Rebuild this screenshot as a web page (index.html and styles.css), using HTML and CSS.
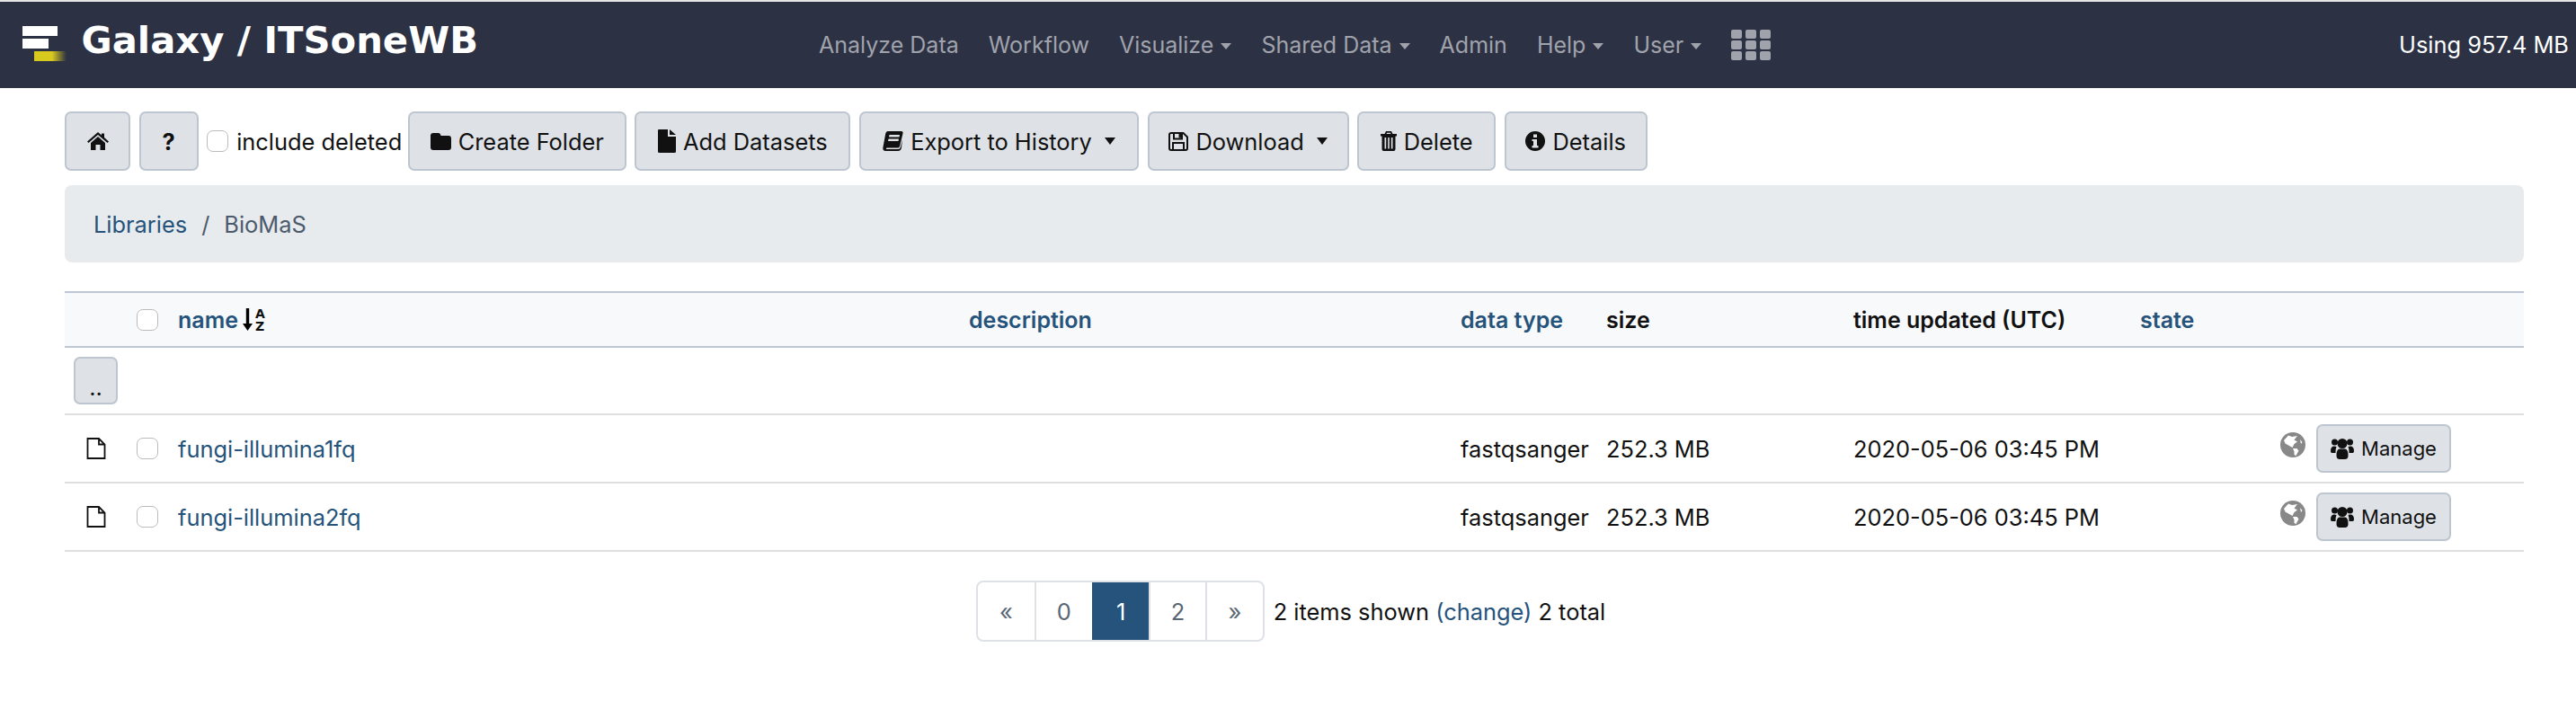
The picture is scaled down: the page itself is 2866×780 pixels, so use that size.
FILE: index.html
```html
<!DOCTYPE html>
<html lang="en">
<head>
    <meta charset="UTF-8">
    <title>Galaxy / ITSoneWB</title>
    <link rel="stylesheet" href="styles.css">
</head>
<body>
    <header class="masthead">
        <a class="brand" href="#">
            <span class="brand-logo">
                <span class="bar bar-one"></span>
                <span class="bar bar-two"></span>
                <span class="bar bar-three"></span>
            </span>
            <span class="brand-text">Galaxy / ITSoneWB</span>
        </a>
        <nav class="mainnav">
            <a href="#">Analyze Data</a>
            <a href="#">Workflow</a>
            <a href="#" class="drop">Visualize</a>
            <a href="#" class="drop">Shared Data</a>
            <a href="#">Admin</a>
            <a href="#" class="drop">Help</a>
            <a href="#" class="drop">User</a>
            <a href="#" class="apps">
                <svg width="44" height="34" viewBox="0 0 44 34" fill="#a0a3ac">
                    <rect x="0" y="0" width="12" height="10" rx="2"/><rect x="16" y="0" width="12" height="10" rx="2"/><rect x="32" y="0" width="12" height="10" rx="2"/>
                    <rect x="0" y="12" width="12" height="10" rx="2"/><rect x="16" y="12" width="12" height="10" rx="2"/><rect x="32" y="12" width="12" height="10" rx="2"/>
                    <rect x="0" y="24" width="12" height="10" rx="2"/><rect x="16" y="24" width="12" height="10" rx="2"/><rect x="32" y="24" width="12" height="10" rx="2"/>
                </svg>
            </a>
        </nav>
        <div class="quota">Using 957.4 MB</div>
    </header>

    <div class="container">
        <div class="toolbar">
            <button class="btn btn-home">
                <svg class="icon" width="24" height="20" viewBox="0 0 24 20"><path d="M12 0 L16 3.500 V1.500 H19 V6 L24 10.500 L22.500 12 L12 3 L1.500 12 L0 10.500 Z M4 12 L12 5 L20 12 V20 H14.500 V14 H9.500 V20 H4 Z"/></svg>
            </button>
            <button class="btn btn-help">?</button>
            <label class="deleted"><input type="checkbox" class="check">include deleted</label>
            <button class="btn btn-create">
                <svg class="icon" width="23" height="20" viewBox="0 0 23 20"><path d="M3 1 H9 Q10.500 1 11 2.500 L11.500 4 H20 Q23 4 23 7 V17 Q23 20 20 20 H3 Q0 20 0 17 V4 Q0 1 3 1 Z"/></svg>
                Create Folder
            </button>
            <button class="btn btn-add">
                <svg class="icon" width="20" height="26" viewBox="0 0 20 26"><path d="M1 0 H11 V8 H20 V24.500 Q20 26 18.500 26 H1.500 Q0 26 0 24.500 V1 Q0 0 1 0 Z M13 0 L20 6 H13 Z"/></svg>
                Add Datasets
            </button>
            <button class="btn btn-export caret">
                <svg class="icon" width="23" height="22" viewBox="0 0 23 22"><path fill-rule="evenodd" d="M6 0 H21 Q23 0 22.500 2.500 L19 17 Q18.500 18.500 16.500 18.500 H5 Q3.500 18.500 4 20 H17 Q19.500 20 20 17.500 L22 9 L21 18 Q20.500 22 17 22 H3.500 Q-0.500 22 0.500 17.500 L3 4 Q3.500 0 6 0 Z M7.500 4 L7 6.500 H18.500 L19 4 Z M6.500 8.500 L6 11 H17.500 L18 8.500 Z"/></svg>
                Export to History
            </button>
            <button class="btn btn-download caret">
                <svg class="icon-line" width="22" height="21" viewBox="0 0 22 21"><path d="M3 1 H16.500 L21 5.500 V18 Q21 20 19 20 H3 Q1 20 1 18 V3 Q1 1 3 1 Z M6 1 V7.500 H15 V1 M5 20 V12 H17 V20"/><path class="icon-solid" d="M11.500 2 H14 V6.500 H11.500 Z"/></svg>
                Download
            </button>
            <button class="btn btn-delete">
                <svg class="icon" width="18" height="22" viewBox="0 0 18 22"><path fill-rule="evenodd" d="M6 0 H12 L13.500 3 H18 V5.500 H16.500 V20 Q16.500 22 14.500 22 H3.500 Q1.500 22 1.500 20 V5.500 H0 V3 H4.500 Z M7 1.800 L6.500 3 H11.500 L11 1.800 Z M4.500 7 V19.500 H6.200 V7 Z M8.200 7 V19.500 H9.800 V7 Z M11.800 7 V19.500 H13.500 V7 Z"/></svg>
                Delete
            </button>
            <button class="btn btn-details">
                <svg class="icon" width="22" height="22" viewBox="0 0 22 22"><path fill-rule="evenodd" d="M11 0 A11 11 0 1 1 11 22 A11 11 0 1 1 11 0 Z M9 3.500 V7 H13 V3.500 Z M7.500 9 V11 H9 V16 H7.500 V18.500 H14.500 V16 H13 V9 Z"/></svg>
                Details
            </button>
        </div>

        <div class="breadcrumb">
            <a href="#">Libraries</a>
            <span class="crumb-sep">/</span>
            <span class="crumb-current">BioMaS</span>
        </div>

        <table class="folders">
            <colgroup>
                <col class="col-icon"><col class="col-check"><col class="col-name"><col class="col-desc">
                <col class="col-type"><col class="col-size"><col class="col-time"><col class="col-state"><col class="col-actions">
            </colgroup>
            <thead>
                <tr>
                    <th></th>
                    <th><input type="checkbox" class="check"></th>
                    <th>
                        <div class="sort-head">
                            <a href="#">name</a>
                            <svg class="sort-arrow" width="11" height="25" viewBox="0 0 11 25"><path d="M3.800 0 H7.200 V17 H11 L5.500 25 L0 17 H3.800 Z"/></svg>
                            <span class="az"><span>A</span><span>Z</span></span>
                        </div>
                    </th>
                    <th><a href="#">description</a></th>
                    <th><a href="#">data type</a></th>
                    <th>size</th>
                    <th>time updated (UTC)</th>
                    <th><a href="#">state</a></th>
                    <th></th>
                </tr>
            </thead>
            <tbody>
                <tr class="row-up">
                    <td colspan="9"><button class="btn btn-up">..</button></td>
                </tr>
                <tr>
                    <td class="doc">
                        <svg width="22" height="24" viewBox="0 0 22 24" fill="none" stroke="#111" stroke-width="1.800"><path d="M1.500 1 H14 L20.500 7.500 V23 H1.500 Z M14 1 V7.500 H20.500"/></svg>
                    </td>
                    <td><input type="checkbox" class="check"></td>
                    <td><a href="#">fungi-illumina1fq</a></td>
                    <td></td>
                    <td>fastqsanger</td>
                    <td>252.3 MB</td>
                    <td>2020-05-06 03:45 PM</td>
                    <td></td>
                    <td>
                        <div class="actions">
                            <svg class="globe" width="28" height="28" viewBox="0 0 28 28"><circle cx="14" cy="14" r="14" fill="#888"/><path d="M4 9 L9 3.500 L13 5 L19 4 L15.500 8.500 L19 10.500 L15.500 13 L13.500 17 L10 15 L5.500 12.500 Z M14 18 L18.500 18 L20.500 20.500 L17.500 26 L15.500 25 L15.500 21.500 Z M22 8 L24.500 11 L23 13 Z" fill="#fff"/></svg>
                            <button class="btn btn-manage">
                                <svg class="icon" width="26" height="24" viewBox="0 0 26 24"><circle cx="4.500" cy="5" r="3.500"/><circle cx="21.500" cy="5" r="3.500"/><circle cx="13" cy="6.500" r="5.500"/><path d="M0 15 Q0 9.500 4 9.500 L6.500 10 Q5.500 12 5.500 17 H1.500 Q0 17 0 15 Z M26 15 Q26 9.500 22 9.500 L19.500 10 Q20.500 12 20.500 17 H24.500 Q26 17 26 15 Z M6.500 20 Q6.500 12.500 10 12.500 H16 Q19.500 12.500 19.500 20 Q19.500 24 16 24 H10 Q6.500 24 6.500 20 Z"/></svg>
                                Manage
                            </button>
                        </div>
                    </td>
                </tr>
                <tr>
                    <td class="doc">
                        <svg width="22" height="24" viewBox="0 0 22 24" fill="none" stroke="#111" stroke-width="1.800"><path d="M1.500 1 H14 L20.500 7.500 V23 H1.500 Z M14 1 V7.500 H20.500"/></svg>
                    </td>
                    <td><input type="checkbox" class="check"></td>
                    <td><a href="#">fungi-illumina2fq</a></td>
                    <td></td>
                    <td>fastqsanger</td>
                    <td>252.3 MB</td>
                    <td>2020-05-06 03:45 PM</td>
                    <td></td>
                    <td>
                        <div class="actions">
                            <svg class="globe" width="28" height="28" viewBox="0 0 28 28"><circle cx="14" cy="14" r="14" fill="#888"/><path d="M4 9 L9 3.500 L13 5 L19 4 L15.500 8.500 L19 10.500 L15.500 13 L13.500 17 L10 15 L5.500 12.500 Z M14 18 L18.500 18 L20.500 20.500 L17.500 26 L15.500 25 L15.500 21.500 Z M22 8 L24.500 11 L23 13 Z" fill="#fff"/></svg>
                            <button class="btn btn-manage">
                                <svg class="icon" width="26" height="24" viewBox="0 0 26 24"><circle cx="4.500" cy="5" r="3.500"/><circle cx="21.500" cy="5" r="3.500"/><circle cx="13" cy="6.500" r="5.500"/><path d="M0 15 Q0 9.500 4 9.500 L6.500 10 Q5.500 12 5.500 17 H1.500 Q0 17 0 15 Z M26 15 Q26 9.500 22 9.500 L19.500 10 Q20.500 12 20.500 17 H24.500 Q26 17 26 15 Z M6.500 20 Q6.500 12.500 10 12.500 H16 Q19.500 12.500 19.500 20 Q19.500 24 16 24 H10 Q6.500 24 6.500 20 Z"/></svg>
                                Manage
                            </button>
                        </div>
                    </td>
                </tr>
            </tbody>
        </table>

        <div class="paging">
            <ul class="pagination">
                <li><a href="#">«</a></li>
                <li><a href="#">0</a></li>
                <li class="active"><a href="#">1</a></li>
                <li><a href="#">2</a></li>
                <li><a href="#">»</a></li>
            </ul>
            <span class="page-info">2 items shown <a href="#">(change)</a> 2 total</span>
        </div>
    </div>
</body>
</html>
```

FILE: styles.css
```css
* {
    box-sizing: border-box;
}
body {
    margin: 0;
    font-family: Inter, "Open Sans", sans-serif;
    font-size: 25.4px;
    color: #111;
    background: #fff;
}
a {
    color: #25537b;
    text-decoration: none;
}

/* masthead */
.masthead {
    display: flex;
    align-items: center;
    height: 98px;
    border-top: 2px solid #e6e6e6;
    background: #2c3143;
}
.brand {
    display: flex;
    align-items: center;
    width: 911px;
    padding: 0 0 3px 25px;
}
.brand-logo {
    display: flex;
    flex-direction: column;
    width: 65.5px;
    gap: 3px;
}
.bar {
    display: block;
    height: 11px;
    background: #fff;
    filter: blur(0.7px);
}
.bar-one {
    width: 39px;
}
.bar-two {
    width: 29px;
}
.bar-three {
    width: 36px;
    margin-left: 13px;
    background: linear-gradient(to right, #d8c91f 55%, #2c3143);
}
.brand-text {
    margin-bottom: 9px;
    font-family: "DejaVu Sans", sans-serif;
    font-weight: bold;
    font-size: 41.7px;
    color: #fff;
}
.mainnav {
    display: flex;
    align-items: center;
    gap: 33px;
    padding-bottom: 1px;
    font-size: 25px;
}
.mainnav a {
    color: #a0a3ac;
}
.drop::after {
    content: "";
    display: inline-block;
    margin-left: 8px;
    vertical-align: 4px;
    border-top: 7px solid #a0a3ac;
    border-left: 6.5px solid transparent;
    border-right: 6.5px solid transparent;
}
.apps {
    display: flex;
}
.quota {
    margin-left: auto;
    padding: 0 8px 1px 0;
    color: #fff;
}

/* page body */
.container {
    padding: 26px 58px 0 72px;
}
.toolbar {
    display: flex;
    align-items: center;
    gap: 9.6px;
}
.btn {
    display: inline-flex;
    align-items: center;
    justify-content: center;
    gap: 8px;
    height: 66px;
    padding: 0;
    border: 2px solid #bdc6d0;
    border-radius: 7px;
    background: #dee2e6;
    font-family: inherit;
    font-size: 25.4px;
    color: #111;
}
.icon {
    fill: #111;
    flex-shrink: 0;
}
.icon-line {
    fill: none;
    stroke: #111;
    stroke-width: 2;
    flex-shrink: 0;
}
.icon-solid {
    fill: #111;
    stroke: none;
}
.btn-home { width: 73px; }
.btn-help { width: 66px; font-weight: bold; }
.btn-create { width: 243px; }
.btn-add { width: 240px; }
.btn-export { width: 311px; }
.btn-download { width: 224px; }
.btn-delete { width: 154px; }
.btn-details { width: 159px; }
.caret::after {
    content: "";
    margin-left: 6px;
    border-top: 8px solid #111;
    border-left: 6px solid transparent;
    border-right: 6px solid transparent;
}
.deleted {
    display: flex;
    align-items: center;
    gap: 9px;
    width: 214px;
    white-space: nowrap;
}
.check {
    appearance: none;
    display: block;
    flex-shrink: 0;
    width: 24px;
    height: 24px;
    margin: 0;
    border: 1.5px solid #bbb;
    border-radius: 7px;
    background: #fff;
}
.breadcrumb {
    display: flex;
    align-items: center;
    gap: 16px;
    height: 86px;
    margin-top: 16px;
    padding-left: 32px;
    border-radius: 8px;
    background: #e8ebee;
}
.crumb-sep, .crumb-current {
    color: #4c5a6b;
}

/* table */
.folders {
    width: 2736px;
    margin-top: 32px;
    border-collapse: collapse;
    table-layout: fixed;
}
.col-icon { width: 80px; }
.col-check { width: 46px; }
.col-name { width: 880px; }
.col-desc { width: 547px; }
.col-type { width: 162px; }
.col-size { width: 275px; }
.col-time { width: 319px; }
.col-state { width: 156px; }
.col-actions { width: 271px; }
.folders th {
    height: 61px;
    padding: 0;
    border-top: 2px solid #bdc6d5;
    border-bottom: 2px solid #bdc6d5;
    background: #f8f9fa;
    text-align: left;
    font-size: 25px;
    font-weight: 600;
}
.folders td {
    height: 76px;
    padding: 0;
    border-bottom: 2px solid #dedede;
}
.folders .row-up td {
    height: 75px;
    padding-left: 10px;
}
.sort-head {
    display: flex;
    align-items: center;
}
.sort-arrow {
    margin: 0 3px 0 5px;
}
.az {
    display: flex;
    flex-direction: column;
    font-family: "DejaVu Sans", sans-serif;
    font-size: 14px;
    font-weight: bold;
    line-height: 14px;
}
.btn-up {
    width: 49px;
    height: 53px;
    padding-bottom: 2px;
    align-items: flex-end;
}
.folders .doc {
    padding-left: 24px;
}
.doc svg {
    display: block;
}
.actions {
    display: flex;
    align-items: center;
    gap: 12px;
}
.globe {
    margin-bottom: 9px;
}
.btn-manage {
    width: 150px;
    height: 54px;
    font-size: 22px;
}

/* paging */
.paging {
    display: flex;
    align-items: center;
    justify-content: center;
    gap: 10px;
    margin-top: 32px;
    padding-right: 8px;
}
.pagination {
    display: flex;
    height: 68px;
    margin: 0;
    padding: 0;
    list-style: none;
    border: 2px solid #dee2e6;
    border-radius: 8px;
}
.pagination li {
    width: 63.4px;
    border-left: 2px solid #dee2e6;
}
.pagination li:first-child {
    border-left: none;
}
.pagination a {
    display: flex;
    align-items: center;
    justify-content: center;
    height: 100%;
    color: #5a6674;
}
.pagination .active {
    background: #25537b;
    border-color: #25537b;
}
.pagination .active a {
    color: #fff;
}
```
